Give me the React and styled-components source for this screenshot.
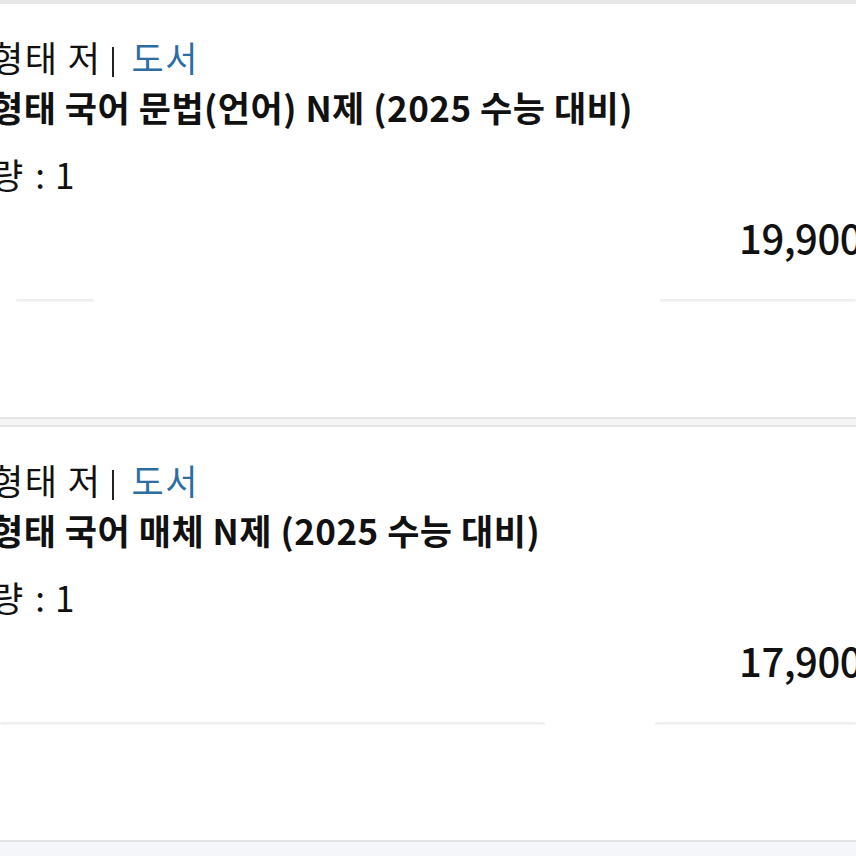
import React from "react";
import styled, { createGlobalStyle } from "styled-components";

const GlobalStyle = createGlobalStyle`
  html, body {
    margin: 0;
    padding: 0;
    background: #ffffff;
    overflow: hidden;
  }
  body {
    font-family: "Noto Sans CJK KR", "Noto Sans", sans-serif;
    color: #111111;
  }
`;

const Page = styled.div`
  width: 856px;
  height: 856px;
  overflow: hidden;
  display: flex;
  flex-direction: column;
  background: #f5f6fa;
`;

const TopRule = styled.div`
  height: 4px;
  background: #e8e8e8;
  flex-shrink: 0;
`;

const Card = styled.div`
  height: 413px;
  flex-shrink: 0;
  background: #ffffff;
  display: flex;
  flex-direction: column;
  padding-top: 28px;
  box-sizing: border-box;
  overflow: hidden;
`;

const Separator = styled.div`
  height: 10px;
  flex-shrink: 0;
  box-sizing: border-box;
  background: #f4f4f4;
  border-top: 2px solid #e4e4e4;
  border-bottom: 2px solid #e4e4e4;
`;

const BottomRule = styled.div`
  height: 2px;
  background: #e4e4e4;
  flex-shrink: 0;
`;

const Line = styled.div`
  margin-left: -9px;
  font-size: 35px;
  line-height: 50px;
  height: 50px;
  white-space: nowrap;
  font-weight: ${p => (p.$bold ? 700 : 400)};
  letter-spacing: ${p => p.$track || 0}px;
  margin-top: ${p => p.$gap || 0}px;
  color: #111111;
`;

const Bar = styled.span`
  display: inline-block;
  width: 2px;
  height: 30px;
  background: #222222;
  vertical-align: -5px;
  margin: 0 17px 0 11px;
`;

const Category = styled.span`
  color: #2c6ea3;
`;

const Spaced = styled.span`
  margin: 0 10px 0 12px;
`;

const Price = styled.div`
  margin-top: 13px;
  margin-right: -6px;
  height: 50px;
  line-height: 50px;
  text-align: right;
  font-size: 40px;
  font-weight: 500;
  letter-spacing: -0.5px;
  white-space: nowrap;
`;

const ShadowRow = styled.div`
  margin-top: 37px;
  display: flex;
  justify-content: space-between;
  padding-left: ${p => p.$left}px;
`;

const ShadowLine = styled.div`
  width: ${p => p.$width}px;
  height: 3px;
  background: linear-gradient(#ececec, #f6f6f6);
  border-radius: 2px;
`;

const items = [
  {
    title: "형태 국어 문법(언어) N제 (2025 수능 대비)",
    price: "19,900",
    shadow: { left: 16, a: 78, b: 196 },
  },
  {
    title: "형태 국어 매체 N제 (2025 수능 대비)",
    price: "17,900",
    shadow: { left: 0, a: 545, b: 201 },
  },
];

function BookCard({ item }) {
  return (
    <Card>
      <Line $track={1.5}>
        형태 저<Bar />
        <Category>도서</Category>
      </Line>
      <Line $bold $track={0.5}>{item.title}</Line>
      <Line $gap={17}>
        량<Spaced>:</Spaced>1
      </Line>
      <Price>{item.price}</Price>
      <ShadowRow $left={item.shadow.left}>
        <ShadowLine $width={item.shadow.a} />
        <ShadowLine $width={item.shadow.b} />
      </ShadowRow>
    </Card>
  );
}

export default function App() {
  return (
    <Page>
      <GlobalStyle />
      <TopRule />
      <BookCard item={items[0]} />
      <Separator />
      <BookCard item={items[1]} />
      <BottomRule />
    </Page>
  );
}
